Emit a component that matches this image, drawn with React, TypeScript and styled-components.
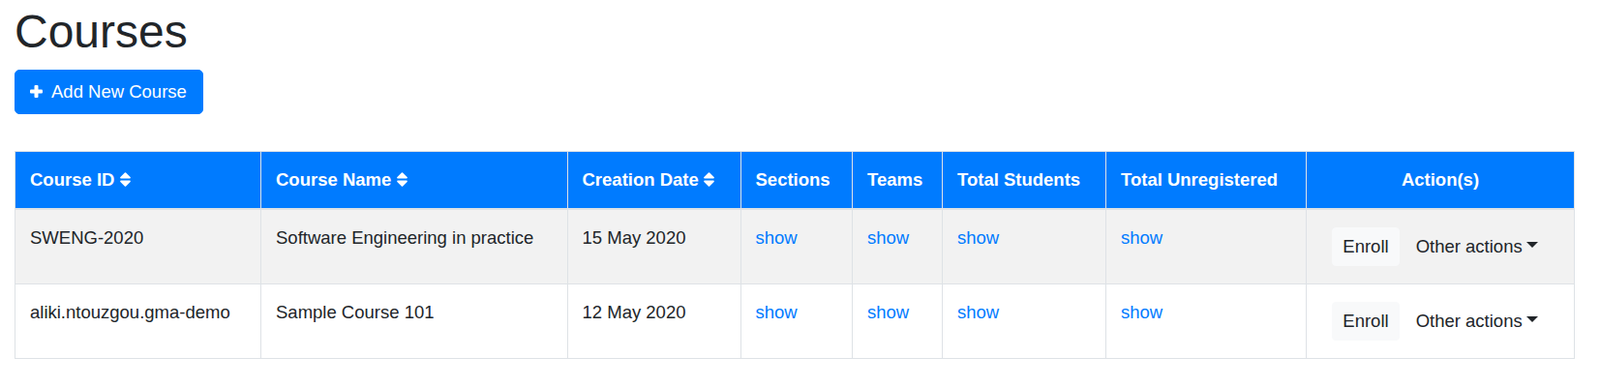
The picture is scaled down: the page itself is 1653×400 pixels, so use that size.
import React from "react";
import styled, { createGlobalStyle } from "styled-components";

const GlobalStyle = createGlobalStyle`
  body {
    margin: 0;
    background: #fff;
    font-family: "Liberation Sans", Arial, sans-serif;
    font-size: 18.5px;
    line-height: 1.5;
    color: #212529;
  }
`;

type Course = {
  id: string;
  name: string;
  created: string;
};

const courses: Course[] = [
  { id: "SWENG-2020", name: "Software Engineering in practice", created: "15 May 2020" },
  { id: "aliki.ntouzgou.gma-demo", name: "Sample Course 101", created: "12 May 2020" },
];

const columns = [
  { label: "Course ID", sortable: true, width: 254 },
  { label: "Course Name", sortable: true, width: 316.5 },
  { label: "Creation Date", sortable: true, width: 179 },
  { label: "Sections", sortable: false, width: 115.5 },
  { label: "Teams", sortable: false, width: 93 },
  { label: "Total Students", sortable: false, width: 169 },
  { label: "Total Unregistered", sortable: false, width: 207 },
  { label: "Action(s)", sortable: false, width: 277, center: true },
];

const PlusIcon = () => (
  <svg width="13" height="13" viewBox="0 0 13 13" fill="currentColor">
    <rect x="4.5" y="0" width="4" height="13" rx="1.1" />
    <rect x="0" y="4.5" width="13" height="4" rx="1.1" />
  </svg>
);

const SortIcon = () => (
  <svg width="11" height="15" viewBox="0 0 11 15" fill="currentColor">
    <path d="M1 6.5h9c.8 0 1.2-.9.6-1.5L6.1.5a.9.9 0 0 0-1.2 0L.4 5c-.6.6-.2 1.5.6 1.5z" />
    <path d="M1 8.5h9c.8 0 1.2.9.6 1.5l-4.5 4.5a.9.9 0 0 1-1.2 0L.4 10c-.6-.6-.2-1.5.6-1.5z" />
  </svg>
);

const Page = styled.div`
  padding: 4px 27px 0 15px;
`;

const Title = styled.h1`
  margin: 0 0 10.5px;
  font-size: 48px;
  font-weight: 500;
  line-height: 1.2;
`;

const AddButton = styled.button`
  display: inline-flex;
  align-items: center;
  gap: 9px;
  padding: 8px 16px 8px 15px;
  font-family: inherit;
  font-size: 18.5px;
  line-height: 27.75px;
  color: #fff;
  background: #007bff;
  border: 1px solid #007bff;
  border-radius: 5px;
  cursor: pointer;

  svg {
    margin-top: -1px;
  }
`;

const Table = styled.table`
  width: 1611px;
  margin-top: 38px;
  border-collapse: collapse;
  table-layout: fixed;
  border: 1px solid #dee2e6;
`;

const HeadCell = styled.th<{ $center?: boolean }>`
  padding: 15px;
  background: #007bff;
  color: #fff;
  font-weight: 700;
  text-align: ${(p) => (p.$center ? "center" : "left")};
  vertical-align: bottom;
  border: 1px solid #dee2e6;
  border-bottom-width: 2px;
  white-space: nowrap;

  svg {
    margin-left: 5.5px;
    vertical-align: -1px;
  }
`;

const Row = styled.tr<{ $striped?: boolean }>`
  background: ${(p) => (p.$striped ? "#f2f2f2" : "#fff")};
`;

const Cell = styled.td`
  padding: 15px;
  vertical-align: top;
  border: 1px solid #dee2e6;
  white-space: nowrap;
`;

const Link = styled.a`
  color: #007bff;
  text-decoration: none;
  cursor: pointer;
`;

const Actions = styled.div`
  display: flex;
  align-items: center;
  justify-content: center;
  gap: 5px;
  height: 46px;
`;

const ActionButton = styled.button<{ $light?: boolean }>`
  display: inline-flex;
  align-items: center;
  height: 40px;
  padding: 0 10.5px;
  font-family: inherit;
  font-size: 18.5px;
  line-height: 27.75px;
  color: #212529;
  background: ${(p) => (p.$light ? "#f8f9fa" : "transparent")};
  border: 1px solid ${(p) => (p.$light ? "#f8f9fa" : "transparent")};
  border-radius: 4px;
  cursor: pointer;
`;

const Caret = styled.span`
  display: inline-block;
  width: 0;
  height: 0;
  margin-left: 4px;
  margin-top: -3px;
  border-top: 6px solid #212529;
  border-left: 6.5px solid transparent;
  border-right: 6.5px solid transparent;
`;

export default function App() {
  return (
    <Page>
      <GlobalStyle />
      <Title>Courses</Title>
      <AddButton>
        <PlusIcon />
        Add New Course
      </AddButton>
      <Table>
        <colgroup>
          {columns.map((c) => (
            <col key={c.label} style={{ width: c.width }} />
          ))}
        </colgroup>
        <thead>
          <tr>
            {columns.map((c) => (
              <HeadCell key={c.label} $center={c.center}>
                {c.label}
                {c.sortable && <SortIcon />}
              </HeadCell>
            ))}
          </tr>
        </thead>
        <tbody>
          {courses.map((course, i) => (
            <Row key={course.id} $striped={i % 2 === 0}>
              <Cell>{course.id}</Cell>
              <Cell>{course.name}</Cell>
              <Cell>{course.created}</Cell>
              <Cell>
                <Link>show</Link>
              </Cell>
              <Cell>
                <Link>show</Link>
              </Cell>
              <Cell>
                <Link>show</Link>
              </Cell>
              <Cell>
                <Link>show</Link>
              </Cell>
              <Cell>
                <Actions>
                  <ActionButton $light>Enroll</ActionButton>
                  <ActionButton>
                    Other actions
                    <Caret />
                  </ActionButton>
                </Actions>
              </Cell>
            </Row>
          ))}
        </tbody>
      </Table>
    </Page>
  );
}
